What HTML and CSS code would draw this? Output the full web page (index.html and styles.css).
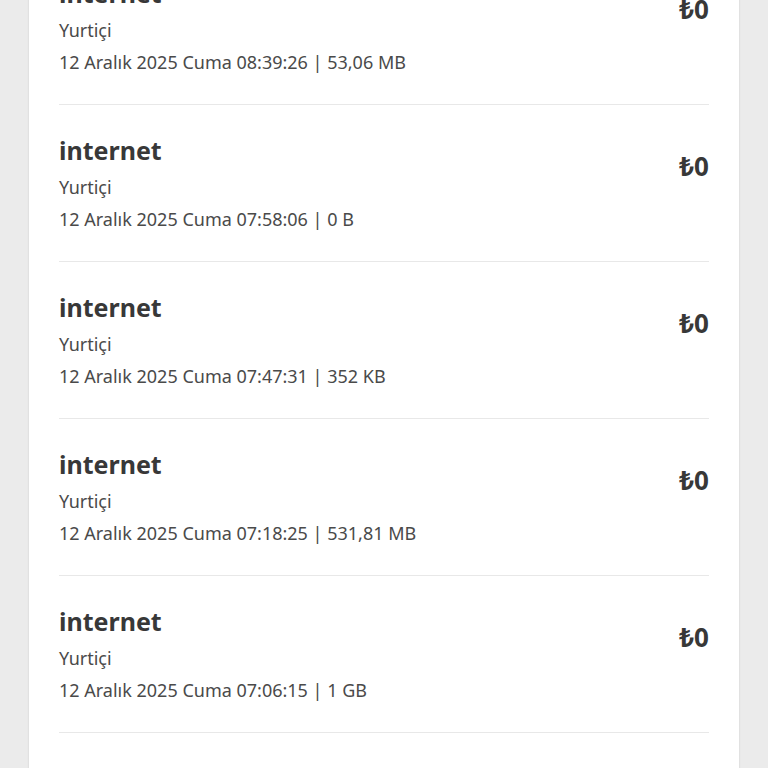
FILE: index.html
```html
<!DOCTYPE html>
<html lang="tr">
<head>
    <meta charset="UTF-8">
    <meta name="viewport" content="width=device-width, initial-scale=1.0">
    <title>Kullanım Geçmişi</title>
    <link rel="stylesheet" href="styles.css">
</head>
<body>
    <div class="page">
        <div class="card">
            <div class="usage-row">
                <div class="usage-info">
                    <div class="usage-title">internet</div>
                    <div class="usage-type">Yurtiçi</div>
                    <div class="usage-date">12 Aralık 2025 Cuma 08:39:26 | 53,06 MB</div>
                </div>
                <div class="usage-amount">₺0</div>
            </div>
            <div class="usage-row">
                <div class="usage-info">
                    <div class="usage-title">internet</div>
                    <div class="usage-type">Yurtiçi</div>
                    <div class="usage-date">12 Aralık 2025 Cuma 07:58:06 | 0 B</div>
                </div>
                <div class="usage-amount">₺0</div>
            </div>
            <div class="usage-row">
                <div class="usage-info">
                    <div class="usage-title">internet</div>
                    <div class="usage-type">Yurtiçi</div>
                    <div class="usage-date">12 Aralık 2025 Cuma 07:47:31 | 352 KB</div>
                </div>
                <div class="usage-amount">₺0</div>
            </div>
            <div class="usage-row">
                <div class="usage-info">
                    <div class="usage-title">internet</div>
                    <div class="usage-type">Yurtiçi</div>
                    <div class="usage-date">12 Aralık 2025 Cuma 07:18:25 | 531,81 MB</div>
                </div>
                <div class="usage-amount">₺0</div>
            </div>
            <div class="usage-row">
                <div class="usage-info">
                    <div class="usage-title">internet</div>
                    <div class="usage-type">Yurtiçi</div>
                    <div class="usage-date">12 Aralık 2025 Cuma 07:06:15 | 1 GB</div>
                </div>
                <div class="usage-amount">₺0</div>
            </div>
            <div class="usage-row">
                <div class="usage-info">
                    <div class="usage-title">internet</div>
                    <div class="usage-type">Yurtiçi</div>
                    <div class="usage-date">12 Aralık 2025 Cuma 06:52:40 | 12,4 MB</div>
                </div>
                <div class="usage-amount">₺0</div>
            </div>
        </div>
    </div>
</body>
</html>
```

FILE: styles.css
```css
html, body {
    margin: 0;
    padding: 0;
    height: 100%;
    overflow: hidden;
}
body {
    background-color: #ebebeb;
    font-family: 'Noto Sans', 'Open Sans', sans-serif;
    color: #3c3c3c;
}
.page {
    padding: 0 29px;
    margin-top: -52px;
}
.card {
    background-color: #fff;
    box-shadow: 0 0 2px rgba(0, 0, 0, 0.12);
    padding: 0 30px;
}
.usage-row {
    display: flex;
    justify-content: space-between;
    align-items: flex-start;
    padding: 30px 0 26px;
    border-bottom: 1px solid #e8e8e8;
}
.usage-title {
    font-size: 25px;
    line-height: 30px;
    font-weight: bold;
    color: #383838;
    margin-bottom: 6px;
}
.usage-type,
.usage-date {
    font-size: 18px;
    line-height: 32px;
    color: #4a4a4a;
}
.usage-amount {
    font-size: 26px;
    line-height: 30px;
    font-weight: bold;
    color: #383838;
    padding-top: 16px;
}
```
